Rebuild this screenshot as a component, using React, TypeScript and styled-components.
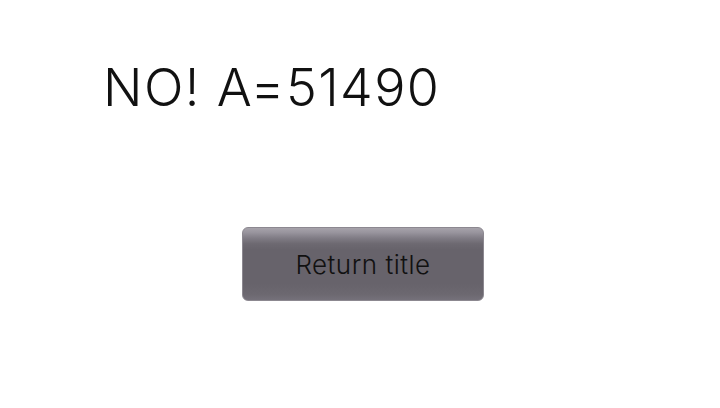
import React from 'react';
import styled, { createGlobalStyle } from 'styled-components';

const GlobalStyle = createGlobalStyle`
    html, body {
        margin: 0;
        padding: 0;
        background: #ffffff;
    }
    body {
        font-family: Inter, "Liberation Sans", Arial, sans-serif;
    }
`;

const App: React.FC = () => {
    return (
        <Screen>
            <GlobalStyle />
            <Result>NO! A=51490</Result>
            <ButtonRow>
                <ReturnButton>Return title</ReturnButton>
            </ButtonRow>
        </Screen>
    );
};
export default App;

const Screen = styled.div`
    width: 720px;
    height: 408px;
    display: flex;
    flex-direction: column;
    background: #fff;
`;

const Result = styled.div`
    margin-top: 58px;
    padding-left: 103px;
    font-size: 52px;
    font-weight: 300;
    line-height: 60px;
    color: #111;
    letter-spacing: 1.4px;
`;

const ButtonRow = styled.div`
    display: flex;
    justify-content: center;
    padding-left: 6px;
    margin-top: 110px;
`;

const ReturnButton = styled.div`
    width: 240px;
    height: 71px;
    box-sizing: content-box;
    border: 1px solid #8c8890;
    border-radius: 6px;
    display: flex;
    align-items: center;
    justify-content: center;
    padding-top: 1px;
    margin-top: -1px;
    font-size: 26px;
    font-weight: 300;
    color: #111;
    letter-spacing: 0.5px;
    background: linear-gradient(
        to bottom,
        #a6a2aa 0%,
        #99959e 6%,
        #807c85 14%,
        #6d6971 22%,
        #67636b 30%,
        #67636b 78%,
        #6c6870 92%,
        #75717a 100%
    );
    cursor: pointer;
`;
